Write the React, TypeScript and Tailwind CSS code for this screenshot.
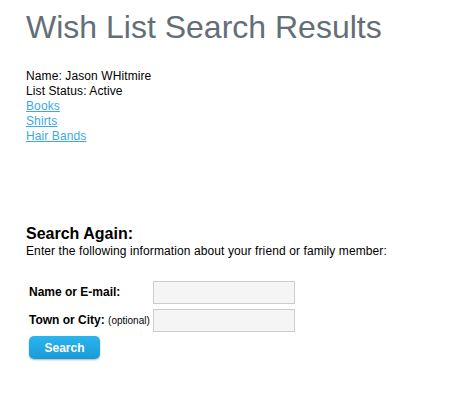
import React from "react";

export default function App() {
  return (
    <div className="min-h-[404px] bg-white pl-[26px] pt-[9px] font-['Liberation_Sans',Arial,sans-serif] text-black">
      <h1 className="m-0 text-[32px] font-normal leading-[37px] text-[#646e76]">Wish List Search Results</h1>
      <div className="mt-[23px] text-[12px] leading-[15px] tracking-[0.1px]">
        <div>Name: Jason WHitmire</div>
        <div>List Status: Active</div>
        <a href="#" className="block w-fit text-[#3ea8df] underline">Books</a>
        <a href="#" className="block w-fit text-[#3ea8df] underline">Shirts</a>
        <a href="#" className="block w-fit text-[#3ea8df] underline">Hair Bands</a>
      </div>
      <div className="mt-[80px]">
        <h2 className="m-0 text-[16px] font-bold leading-[20px]">Search Again:</h2>
        <p className="m-0 text-[12px] leading-[15px] tracking-[0.1px]">Enter the following information about your friend or family member:</p>
      </div>
      <form className="ml-[3px] mt-[22px] flex flex-col gap-[5px]" onSubmit={(e) => e.preventDefault()}>
        <div className="flex h-[23px] items-center">
          <label className="w-[124px] text-[12px] font-bold leading-[15px]">Name or E-mail:</label>
          <input type="text" className="h-[23px] w-[142px] border border-[#cccccc] bg-[#f5f5f5] outline-none" />
        </div>
        <div className="flex h-[23px] items-center">
          <label className="w-[124px] whitespace-nowrap text-[12px] font-bold leading-[15px]">
            Town or City: <span className="text-[10px] font-normal">(optional)</span>
          </label>
          <input type="text" className="h-[23px] w-[142px] border border-[#cccccc] bg-[#f5f5f5] outline-none" />
        </div>
        <button
          type="submit"
          className="-mt-[1px] h-[23px] w-[71px] rounded-[5px] bg-gradient-to-b from-[#2bb5ee] to-[#199ad8] text-[12px] font-bold text-white shadow-[0_1px_2px_rgba(0,0,0,0.3)]"
        >
          Search
        </button>
      </form>
    </div>
  );
}
